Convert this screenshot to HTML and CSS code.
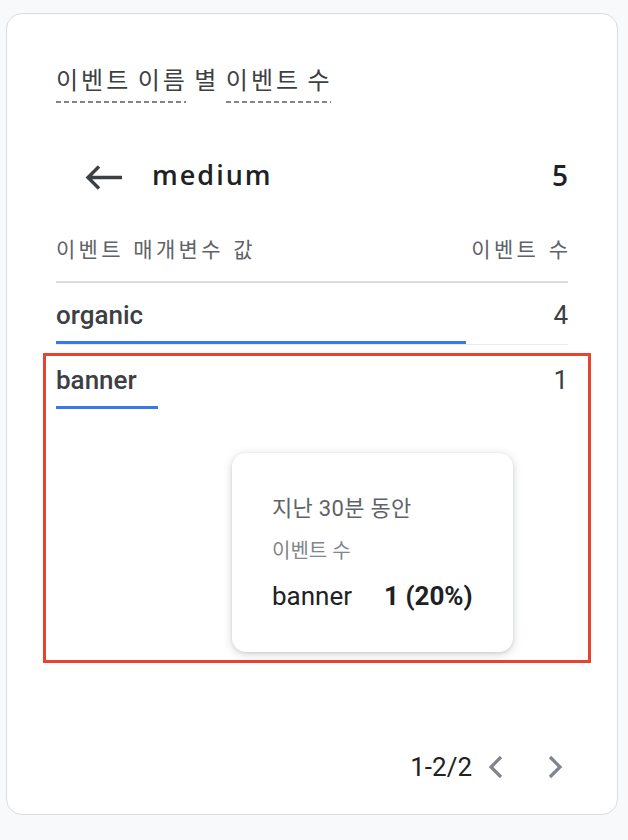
FILE: index.html
```html
<!DOCTYPE html>
<html lang="ko">
<head>
<meta charset="utf-8">
<link rel="stylesheet" href="styles.css">
</head>
<body>
<div class="card">
  <div class="title"><span class="dash">이벤트 이름</span> 별 <span class="dash">이벤트 수</span></div>

  <div class="drill">
    <svg class="back" width="40" height="30" viewBox="0 0 40 30" aria-hidden="true">
      <path d="M4 14.5H38M15 3.5L4 14.5L15 25.5" fill="none" stroke="#3c4043" stroke-width="3.4" stroke-linecap="butt" stroke-linejoin="miter"/>
    </svg>
    <span class="dim">medium</span>
    <span class="total">5</span>
  </div>

  <div class="head">
    <span>이벤트 매개변수 값</span>
    <span>이벤트 수</span>
  </div>

  <div class="row first">
    <div class="line"><span class="name">organic</span><span class="val">4</span></div>
    <div class="track"><div class="bar" style="width:80%"></div></div>
  </div>

  <div class="highlight">
    <div class="row">
      <div class="line"><span class="name">banner</span><span class="val">1</span></div>
      <div class="track last"><div class="bar" style="width:20%"></div></div>
    </div>
    <div class="tooltip">
      <div class="tt-period">지난 30분 동안</div>
      <div class="tt-metric">이벤트 수</div>
      <div class="tt-row"><span class="tt-name">banner</span><span class="tt-val">1 (20%)</span></div>
    </div>
  </div>

  <div class="pager">
    <span class="count">1-2/2</span>
    <svg class="chev" width="24" height="28" viewBox="0 0 24 28" aria-hidden="true">
      <path d="M17 4L7 14L17 24" fill="none" stroke="#80868b" stroke-width="3.2"/>
    </svg>
    <svg class="chev next" width="24" height="28" viewBox="0 0 24 28" aria-hidden="true">
      <path d="M7 4L17 14L7 24" fill="none" stroke="#80868b" stroke-width="3.2"/>
    </svg>
  </div>
</div>
</body>
</html>
```

FILE: styles.css
```css
html, body {
  margin: 0;
  padding: 0;
  background: #f8f9fa;
}
body {
  font-family: Roboto, "Noto Sans CJK KR", sans-serif;
  color: #202124;
  padding: 13px 0 0 6px;
  width: 628px;
  height: 840px;
  box-sizing: border-box;
}
.card {
  box-sizing: border-box;
  width: 612px;
  height: 802px;
  background: #fff;
  border: 1.5px solid #dadce0;
  border-radius: 16px;
  padding: 51px 49px 0 49px;
  display: flex;
  flex-direction: column;
}
.title {
  font-size: 24px;
  line-height: 32px;
  color: #3c4043;
  letter-spacing: 3px;
  word-spacing: -2.5px;
}
.dash {
  display: inline-block;
  padding-bottom: 6px;
  background-image: repeating-linear-gradient(to right, #80868b 0 5px, transparent 5px 8px);
  background-size: calc(100% - 2px) 2px;
  background-repeat: no-repeat;
  background-position: left bottom;
}
.drill {
  display: flex;
  align-items: center;
  height: 40px;
  margin-top: 52px;
}
.back {
  margin-left: 28px;
  margin-right: 28px;
  position: relative;
  top: 3px;
}
.dim {
  font-family: "Open Sans", Roboto, sans-serif;
  font-size: 27px;
  font-weight: 600;
  letter-spacing: 2px;
  line-height: 40px;
  color: #202124;
  flex: 1;
}
.total {
  font-family: "Open Sans", Roboto, sans-serif;
  font-size: 28px;
  font-weight: 600;
  line-height: 40px;
}
.head {
  display: flex;
  justify-content: space-between;
  font-size: 21px;
  line-height: 30px;
  color: #5f6368;
  letter-spacing: 3.3px;
  word-spacing: 1px;
  margin-top: 40px;
  padding-bottom: 16px;
  border-bottom: 2px solid #dadce0;
}
.head span:last-child {
  margin-right: -3.3px;
}
.row.first {
  padding-top: 16px;
}
.line {
  display: flex;
  justify-content: space-between;
  font-size: 26px;
  line-height: 32px;
}
.name {
  font-weight: 500;
  color: #3c4043;
}
.val {
  color: #3c4043;
}
.track {
  margin-top: 9px;
  height: 4px;
  display: flex;
  align-items: flex-end;
  border-bottom: 1.5px solid #e8eaed;
}
.track.last {
  border-bottom: 0;
}
.bar {
  height: 3px;
  background: #3b78e7;
}
.highlight {
  position: relative;
  margin: 8px -23px 0 -13px;
  height: 310px;
  box-sizing: border-box;
  border: 3px solid #e8432e;
  padding: 8px 20px 0 10px;
}
.tooltip {
  position: absolute;
  left: 186px;
  top: 97px;
  width: 281px;
  height: 199px;
  box-sizing: border-box;
  background: #fff;
  border-radius: 14px;
  box-shadow: 0 2px 10px rgba(60, 64, 67, 0.22), 0 1px 3px rgba(60, 64, 67, 0.12);
  padding: 41px 0 0 40px;
}
.tt-period {
  font-size: 22px;
  line-height: 30px;
  color: #5f6368;
  letter-spacing: 0.3px;
}
.tt-metric {
  font-size: 20px;
  line-height: 26px;
  color: #80868b;
  margin-top: 14px;
}
.tt-row {
  margin-top: 16px;
  font-size: 26px;
  line-height: 32px;
  color: #202124;
  display: flex;
  gap: 32px;
}
.tt-val {
  font-weight: 700;
}
.pager {
  margin-top: auto;
  margin-bottom: 27px;
  display: flex;
  align-items: center;
  justify-content: flex-end;
  height: 40px;
  margin-right: 1px;
}
.count {
  font-size: 26px;
  line-height: 40px;
  color: #202124;
  margin-right: 12px;
}
.chev.next {
  margin-left: 35px;
}
```
